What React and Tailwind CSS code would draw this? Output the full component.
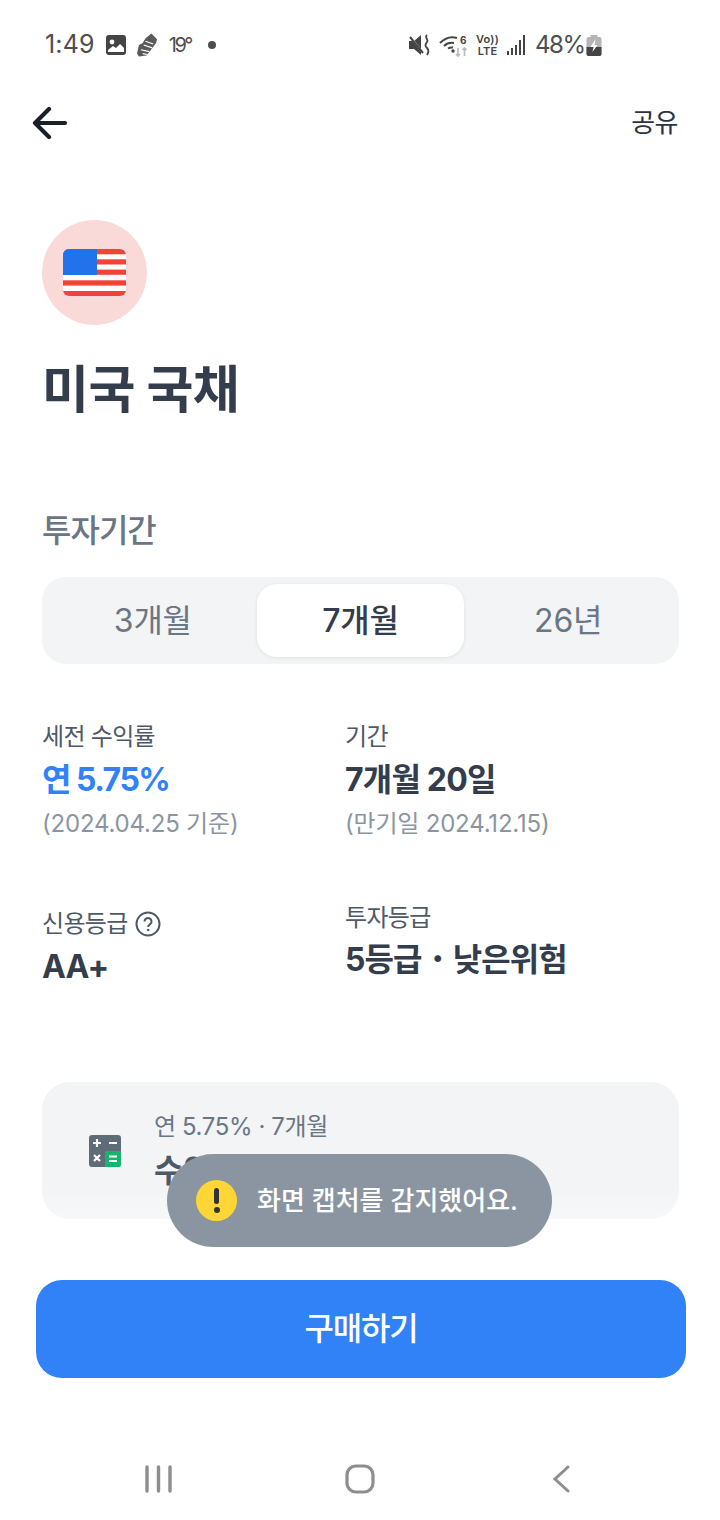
const StatusBar = () => (
  <div className="h-[90px] pl-[45px] pr-[118px] flex items-center justify-between text-[#4e4e4e]">
    <div className="flex items-center">
      <span className="text-[25px] tracking-[0.2px]">1:49</span>
      <svg width="20" height="20" viewBox="0 0 20 20" className="ml-[11px]">
        <rect width="20" height="20" rx="3" fill="#444" />
        <circle cx="6" cy="7" r="2.4" fill="#fff" />
        <path d="M2 17v-2l5-4 3 2 4-4 4 4v4z" fill="#fff" />
      </svg>
      <svg width="21" height="26" viewBox="0 0 22 26" className="ml-[11px]">
        <path d="M15 1l6 6-1 4-6 8-4 5-8 1-2-3 2-9 4-2 3-5z" fill="#5a5a5a" />
        <path d="M7 13l9 3M4 18l9 2M9 9l8 3M6 22l5 1" stroke="#fff" strokeWidth="1.2" />
      </svg>
      <span className="ml-[11px] text-[20px] tracking-[-2.5px]">19°</span>
      <span className="ml-[17px] w-[8px] h-[8px] rounded-full bg-[#4e4e4e]" />
    </div>
    <div className="flex items-center">
      <svg width="21" height="22" viewBox="0 0 21 22">
        <path d="M0 7h5l7-6v20l-7-6H0z" fill="#444" />
        <path d="M0 1l14 18" stroke="#fff" strokeWidth="2" />
        <path d="M1 3l13 16" stroke="#444" strokeWidth="2" />
        <path d="M18 1c-3 3 2 4 0 7s-2 4 0 6 2 4 0 7" stroke="#444" strokeWidth="1.8" fill="none" />
      </svg>
      <svg width="28" height="24" viewBox="0 0 28 24" className="ml-[9px]">
        <path d="M1 10C6 5 12 3 18 5M5 13c3-3 7-3.500 10-3M9 15.500c1.500-1 3-1.200 5-1" stroke="#444" strokeWidth="2" fill="none" />
        <circle cx="14" cy="18" r="1.7" fill="#444" />
        <path d="M19 15v8M17 21l2 2 2-2M25.500 23v-8M23.500 17l2-2 2 2" stroke="#bbb" strokeWidth="1.7" fill="none" />
        <text x="21" y="11" fontSize="10" fontWeight="700" fill="#444" fontFamily="Inter">6</text>
      </svg>
      <div className="ml-[10px] flex flex-col items-center text-[#444] font-semibold text-[11px] leading-[12px] w-[21px] tracking-[0.2px]">
        <span>Vo))</span>
        <span>LTE</span>
      </div>
      <svg width="19" height="22" viewBox="0 0 19 22" className="ml-[9px]">
        <path d="M1 17v4M5 14v7M9 11v10M13 6v15M17 1v20" stroke="#444" strokeWidth="2" />
      </svg>
      <span className="ml-[9px] w-[48px] text-[24px] tracking-[-1.4px]">48%</span>
      <svg width="16" height="22" viewBox="0 0 15 22" className="ml-[3px]">
        <path d="M4 1h7v2h2a2 2 0 012 2v15a2 2 0 01-2 2H2a2 2 0 01-2-2V5a2 2 0 012-2h2z" fill="#b5b5b5" />
        <path d="M0 13h15v7a2 2 0 01-2 2H2a2 2 0 01-2-2z" fill="#444" />
        <path d="M9 5l-5 8h3l-1 5 5-7H8z" fill="#fff" />
      </svg>
    </div>
  </div>
);

const Flag = () => (
  <svg width="63" height="47" viewBox="0 0 63 47">
    <defs>
      <clipPath id="flag-clip">
        <rect width="63" height="47" rx="6" />
      </clipPath>
    </defs>
    <g clipPath="url(#flag-clip)">
      <rect width="63" height="47" fill="#fff" />
      <rect y="0" width="63" height="5.3" fill="#f04438" />
      <rect y="10.3" width="63" height="5.2" fill="#f04438" />
      <rect y="20.6" width="63" height="5.2" fill="#f04438" />
      <rect y="31.3" width="63" height="5.3" fill="#f04438" />
      <rect y="42" width="63" height="5" fill="#f04438" />
      <rect width="34" height="26" fill="#2272eb" />
    </g>
  </svg>
);

const Calculator = () => (
  <svg width="32" height="32" viewBox="0 0 32 32">
    <rect width="32" height="32" rx="3" fill="#606b78" />
    <path d="M16 16h16v13a3 3 0 01-3 3H16z" fill="#15b56d" />
    <path d="M4 8h8M8 4v8M20 8h8M5 20l6 6M11 20l-6 6" stroke="#fff" strokeWidth="2.2" />
    <path d="M20 21.5h8M20 26h8" stroke="#fff" strokeWidth="2" />
  </svg>
);

const Tab = ({ label, active }) => (
  <div
    className={`flex-1 flex items-center justify-center rounded-[20px] text-[32px] tracking-[-0.2px] ${
      active ? 'bg-white text-[#333d4b] font-medium shadow-[0_1px_4px_rgba(0,0,0,0.08)]' : 'text-[#6b7684]'
    }`}
  >
    {label}
  </div>
);

export default function App() {
  return (
    <div className="relative w-[720px] h-[1520px] bg-white overflow-hidden flex flex-col font-['Inter','Noto_Sans_CJK_KR',sans-serif]">
      <StatusBar />

      <div className="h-[64px] pl-[32px] pr-[42px] flex items-center justify-between">
        <svg width="36" height="32" viewBox="0 0 36 32" className="mt-[2px]">
          <path d="M33 16H3M17 2L3 16l14 14" fill="none" stroke="#191f28" strokeWidth="4.2" strokeLinecap="round" strokeLinejoin="round" />
        </svg>
        <span className="text-[26px] text-[#2b3440] tracking-[-0.5px]">공유</span>
      </div>

      <div className="pl-[42px] pr-[41px] flex-1 flex flex-col">
        <div className="mt-[66px] w-[105px] h-[105px] rounded-full bg-[#fad9d9] flex items-center justify-center">
          <Flag />
        </div>
        <h1 className="mt-[30px] text-[51px] leading-[70px] font-bold text-[#333d4b] tracking-[-0.5px]">미국 국채</h1>

        <div className="mt-[86px] text-[32px] leading-[40px] font-medium text-[#6b7684] tracking-[-1px]">투자기간</div>
        <div className="mt-[26px] h-[87px] rounded-[24px] bg-[#f2f4f6] p-[7px] flex">
          <Tab label="3개월" />
          <Tab label="7개월" active />
          <Tab label="26년" />
        </div>

        <div className="mt-[56px] grid grid-cols-[303px_1fr]">
          <div>
            <div className="text-[24px] leading-[34px] text-[#4e5968] tracking-[-0.7px]">세전 수익률</div>
            <div className="mt-[5px] text-[32px] leading-[42px] font-bold text-[#3182f6] tracking-[-1.5px]">연 5.75%</div>
            <div className="mt-[6px] text-[24px] leading-[34px] text-[#8b95a1] tracking-[-0.2px]">(2024.04.25 기준)</div>
          </div>
          <div>
            <div className="text-[24px] leading-[34px] text-[#4e5968] tracking-[-0.7px]">기간</div>
            <div className="mt-[5px] text-[32px] leading-[42px] font-bold text-[#333d4b] tracking-[-0.8px]">7개월 20일</div>
            <div className="mt-[6px] text-[24px] leading-[34px] text-[#8b95a1] tracking-[-0.2px]">(만기일 2024.12.15)</div>
          </div>
          <div className="mt-[66px]">
            <div className="flex items-center gap-[7px] text-[24px] leading-[34px] text-[#4e5968] tracking-[-0.7px]">
              신용등급
              <svg width="26" height="26" viewBox="0 0 26 26">
                <circle cx="13" cy="13" r="11.5" fill="none" stroke="#4e5968" strokeWidth="2" />
                <path d="M9.5 10.5a3.5 3.5 0 116 2.4c-1 1-2.3 1.4-2.3 3" fill="none" stroke="#4e5968" strokeWidth="2" />
                <circle cx="13.2" cy="19" r="1.3" fill="#4e5968" />
              </svg>
            </div>
            <div className="mt-[5px] text-[32px] leading-[42px] font-bold text-[#333d4b] tracking-[-0.8px]">AA+</div>
          </div>
          <div className="mt-[60px]">
            <div className="text-[24px] leading-[34px] text-[#4e5968] tracking-[-0.7px]">투자등급</div>
            <div className="mt-[4px] text-[32px] leading-[42px] font-bold text-[#333d4b] tracking-[-0.9px]">
              5등급<span className="font-normal">・</span>낮은위험
            </div>
          </div>
        </div>

        <div className="mt-[94px] h-[137px] rounded-[28px] bg-linear-to-b from-[#f2f4f6] via-[#f2f4f6] via-75% to-[#f7f8fa] pl-[47px] flex items-center">
          <Calculator />
          <div className="ml-[33px] mt-[1px]">
            <div className="text-[24px] leading-[34px] text-[#6b7684] tracking-[-0.4px]">연 5.75% · 7개월</div>
            <div className="mt-[6px] text-[32px] leading-[42px] font-bold text-[#4e5968]">수익금 계산해보기</div>
          </div>
        </div>
      </div>

      <div className="pl-[36px] pr-[34px] absolute left-0 right-0 top-[1280px]">
        <div className="h-[98px] rounded-[26px] bg-[#3182f6] flex items-center justify-center text-[32px] font-medium text-white tracking-[-1.2px]">
          구매하기
        </div>
      </div>

      <div className="absolute left-[167px] top-[1154px] w-[385px] h-[93px] rounded-full bg-[#8b95a1] pl-[29px] flex items-center">
        <div className="w-[41px] h-[41px] rounded-full bg-[#ffd633] flex flex-col items-center justify-center gap-[3px]">
          <div className="w-[5px] h-[16px] rounded-full bg-[#333]" />
          <div className="w-[6px] h-[6px] rounded-full bg-[#333]" />
        </div>
        <span className="ml-[20px] text-[26px] font-medium text-white">화면 캡처를 감지했어요.</span>
      </div>

      <div className="h-[82px] pl-[145px] pr-[150px] flex items-center justify-between absolute left-0 right-0 bottom-0">
        <svg width="28" height="28" viewBox="0 0 28 28">
          <path d="M2 2v24M13.5 2v24M25 2v24" stroke="#8e8e8e" strokeWidth="3.4" strokeLinecap="round" />
        </svg>
        <svg width="30" height="30" viewBox="0 0 30 30" className="mr-[6px]">
          <rect x="2" y="2" width="26" height="26" rx="9" fill="none" stroke="#8e8e8e" strokeWidth="3.2" />
        </svg>
        <svg width="18" height="28" viewBox="0 0 18 28">
          <path d="M16 2L3 14l13 12" fill="none" stroke="#8e8e8e" strokeWidth="3" strokeLinecap="round" />
        </svg>
      </div>
    </div>
  );
}
